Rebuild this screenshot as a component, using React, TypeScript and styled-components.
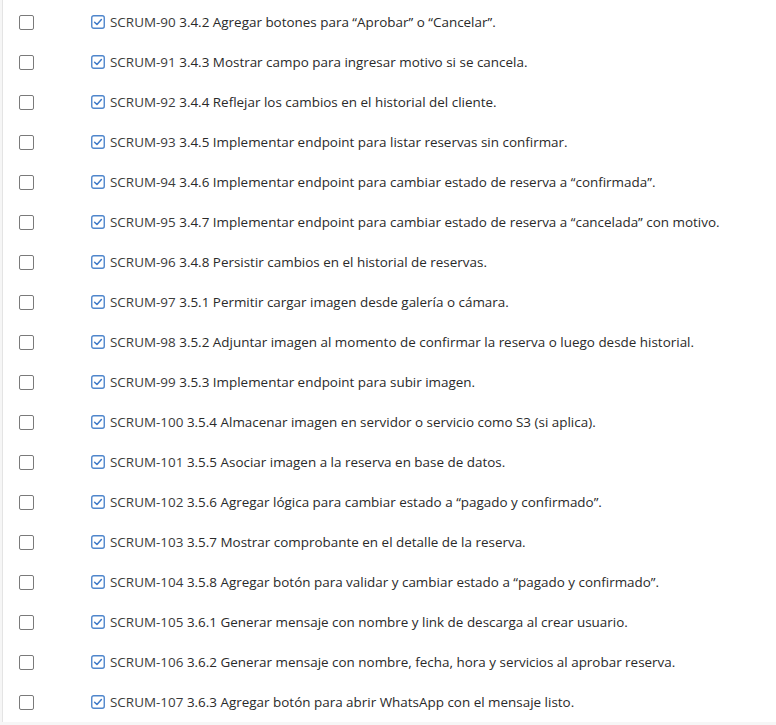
import React from "react";
import styled, { createGlobalStyle } from "styled-components";

const Global = createGlobalStyle`
  html, body { margin: 0; padding: 0; background: #f6f6f6; }
  body { font-family: "Open Sans", "Noto Sans", sans-serif; }
`;

const Panel = styled.div`
  margin-left: 2px;
  border-left: 1px solid #e4e4e4;
  background: #ffffff;
  padding-top: 2px;
`;

const Row = styled.div`
  height: 40px;
  display: flex;
  align-items: center;
`;

const SelectCell = styled.div`
  width: 88px;
  padding-left: 16px;
  box-sizing: border-box;
  display: flex;
  align-items: center;
  flex-shrink: 0;
`;

const Box = styled.span`
  display: block;
  width: 13px;
  height: 13px;
  border: 1px solid #7a7a7a;
  border-radius: 2px;
  background: #fff;
`;

const Task = styled.div`
  display: flex;
  align-items: center;
  gap: 5px;
  font-size: 13.45px;
  color: #2a2a2a;
  white-space: nowrap;
`;

const Key = styled.span`
  color: #3c3c3c;
`;

const Checked = () => (
  <svg width="14" height="14" viewBox="0 0 14 14" style={{ display: "block", flexShrink: 0 }}>
    <rect x="0.75" y="0.75" width="12.5" height="12.5" rx="2" fill="#fff" stroke="#4f86cc" strokeWidth="1.4" />
    <path d="M3.6 7.2 L6 9.5 L10.4 4.6" fill="none" stroke="#3f7ac7" strokeWidth="1.5" strokeLinecap="round" strokeLinejoin="round" />
  </svg>
);

const items: [string, string][] = [
  ["SCRUM-90", "3.4.2 Agregar botones para “Aprobar” o “Cancelar”."],
  ["SCRUM-91", "3.4.3 Mostrar campo para ingresar motivo si se cancela."],
  ["SCRUM-92", "3.4.4 Reflejar los cambios en el historial del cliente."],
  ["SCRUM-93", "3.4.5 Implementar endpoint para listar reservas sin confirmar."],
  ["SCRUM-94", "3.4.6 Implementar endpoint para cambiar estado de reserva a “confirmada”."],
  ["SCRUM-95", "3.4.7 Implementar endpoint para cambiar estado de reserva a “cancelada” con motivo."],
  ["SCRUM-96", "3.4.8 Persistir cambios en el historial de reservas."],
  ["SCRUM-97", "3.5.1 Permitir cargar imagen desde galería o cámara."],
  ["SCRUM-98", "3.5.2 Adjuntar imagen al momento de confirmar la reserva o luego desde historial."],
  ["SCRUM-99", "3.5.3 Implementar endpoint para subir imagen."],
  ["SCRUM-100", "3.5.4 Almacenar imagen en servidor o servicio como S3 (si aplica)."],
  ["SCRUM-101", "3.5.5 Asociar imagen a la reserva en base de datos."],
  ["SCRUM-102", "3.5.6 Agregar lógica para cambiar estado a “pagado y confirmado”."],
  ["SCRUM-103", "3.5.7 Mostrar comprobante en el detalle de la reserva."],
  ["SCRUM-104", "3.5.8 Agregar botón para validar y cambiar estado a “pagado y confirmado”."],
  ["SCRUM-105", "3.6.1 Generar mensaje con nombre y link de descarga al crear usuario."],
  ["SCRUM-106", "3.6.2 Generar mensaje con nombre, fecha, hora y servicios al aprobar reserva."],
  ["SCRUM-107", "3.6.3 Agregar botón para abrir WhatsApp con el mensaje listo."],
];

export default function App() {
  return (
    <>
      <Global />
      <Panel>
        {items.map(([k, t]) => (
          <Row key={k}>
            <SelectCell>
              <Box />
            </SelectCell>
            <Task>
              <Checked />
              <span>
                <Key>{k}</Key> {t}
              </span>
            </Task>
          </Row>
        ))}
      </Panel>
    </>
  );
}
